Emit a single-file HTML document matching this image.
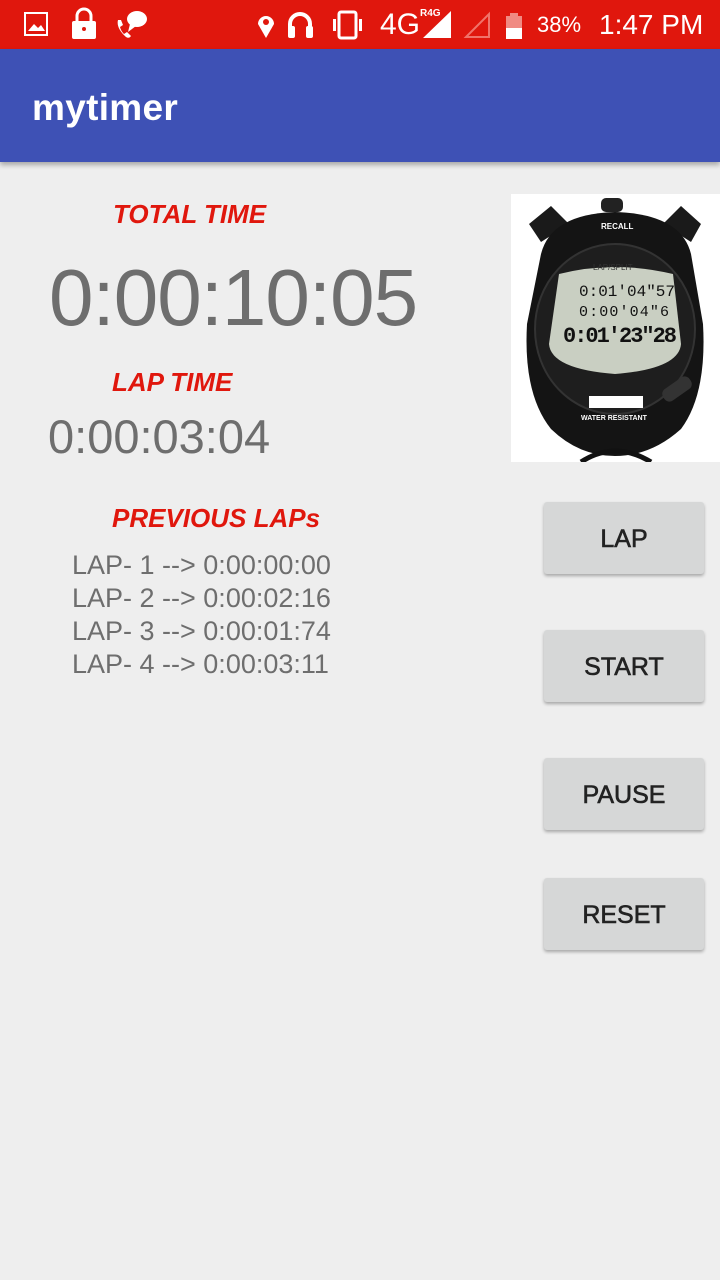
<!DOCTYPE html>
<html><head><meta charset="utf-8"><style>
*{margin:0;padding:0;box-sizing:border-box}
body{width:720px;height:1280px;background:#eeeeee;font-family:"Liberation Sans",Roboto,sans-serif;position:relative;overflow:hidden}
.sb{position:absolute;left:0;top:0;width:720px;height:49px;background:#e0170d;color:#fff}
.ab{position:absolute;left:0;top:49px;width:720px;height:113px;background:#3e51b5;box-shadow:0 3px 5px rgba(0,0,0,.3)}
.ab span{position:absolute;left:32px;top:38px;font-size:37px;color:#fff;font-weight:bold;letter-spacing:0.3px}
.lbl{position:absolute;color:#e0170d;font-weight:bold;font-style:italic;font-size:26px}
.t{position:absolute;color:#6e6e6e}
.lap{position:absolute;left:72px;font-size:27px;color:#6e6e6e}
.btn{position:absolute;left:544px;width:160px;height:72px;background:#d6d7d7;border-radius:3px;box-shadow:0 2px 3px rgba(0,0,0,.3);font-size:25px;color:#222;-webkit-text-stroke:0.6px #222;text-align:center;line-height:74px}
</style></head><body>
<div class="sb">
<svg width="720" height="49" style="position:absolute;left:0;top:0">
<rect x="25" y="13" width="22" height="22" fill="none" stroke="#fff" stroke-width="2"/>
<path d="M28 31 L34 24 L38 28 L41 25 L45 31Z" fill="#fff"/>
<rect x="72" y="21" width="24" height="18" rx="2" fill="#fff"/><path d="M77 21 V16 a7 7 0 0 1 14 0 V21" fill="none" stroke="#fff" stroke-width="3"/><circle cx="84" cy="29" r="2" fill="#e0170d"/>
<path d="M118 20 q-2 8 8 17 q3 2 5-1 l-4-4 -3 2 q-3-3-4-7 l3-2 -2-5z" fill="#fff"/>
<ellipse cx="137" cy="19" rx="10" ry="8" fill="#fff"/><path d="M130 24 L128 32 L136 26Z" fill="#fff"/>
<path d="M266 38 L258 24 a8 8 0 1 1 16 0Z" fill="#fff"/><circle cx="266" cy="22" r="3" fill="#e0170d"/>
<path d="M290 33 V24 a10 10 0 0 1 20 0 V33" fill="none" stroke="#fff" stroke-width="4"/><rect x="288" y="26" width="7" height="12" rx="2" fill="#fff"/><rect x="306" y="26" width="7" height="12" rx="2" fill="#fff"/>
<rect x="339" y="12" width="17" height="26" rx="2" fill="none" stroke="#fff" stroke-width="3"/><rect x="333" y="19" width="3" height="12" fill="#fff"/><rect x="359" y="19" width="3" height="12" fill="#fff"/>
<path d="M423 38 L451 11 V38Z" fill="#fff"/><path d="M466 37 L489 14 V37Z" fill="none" stroke="#f0736a" stroke-width="2"/>
<rect x="510" y="13" width="8" height="3" fill="#f08a82"/><rect x="506" y="16" width="16" height="23" fill="#f08a82"/><rect x="506" y="28" width="16" height="11" fill="#fff"/>
</svg>
<span style="position:absolute;left:380px;top:8px;font-size:30px">4G</span>
<span style="position:absolute;left:420px;top:8px;font-size:10px;font-weight:bold">R4G</span>
<span style="position:absolute;left:537px;top:12px;font-size:22px">38%</span>
<span style="position:absolute;left:599px;top:9px;font-size:28px">1:47 PM</span>
</div>
<div class="ab"><span>mytimer</span></div>

<div class="lbl" style="left:113px;top:199px">TOTAL TIME</div>
<div class="t" style="left:49px;top:252px;font-size:80px;letter-spacing:-1px">0:00:10:05</div>
<div class="lbl" style="left:112px;top:367px">LAP TIME</div>
<div class="t" style="left:48px;top:409px;font-size:47px">0:00:03:04</div>
<div class="lbl" style="left:112px;top:503px">PREVIOUS LAPs</div>
<div class="lap" style="top:550px">LAP- 1 --&gt; 0:00:00:00</div>
<div class="lap" style="top:583px">LAP- 2 --&gt; 0:00:02:16</div>
<div class="lap" style="top:616px">LAP- 3 --&gt; 0:00:01:74</div>
<div class="lap" style="top:649px">LAP- 4 --&gt; 0:00:03:11</div>

<svg style="position:absolute;left:511px;top:194px" width="209" height="268">
<rect width="209" height="268" fill="#fff"/>
<rect x="90" y="4" width="22" height="14" rx="5" fill="#222"/>
<path d="M18 30 L40 12 L58 30 L30 48Z" fill="#1a1a1a"/>
<path d="M190 30 L170 12 L152 30 L180 48Z" fill="#1a1a1a"/>
<path d="M30 60 Q40 20 104 18 Q170 20 180 60 L192 130 Q196 200 170 235 Q140 262 104 262 Q68 262 40 235 Q12 200 16 130Z" fill="#141414"/>
<ellipse cx="104" cy="135" rx="80" ry="85" fill="#1e1e1e" stroke="#333" stroke-width="2"/>
<path d="M48 80 Q104 66 162 80 L170 150 Q168 175 104 180 Q40 175 38 150Z" fill="#c9cfc2"/>
<text x="68" y="102" font-size="16" font-family="Liberation Mono" fill="#111" textLength="96">0:01'04"57</text>
<text x="68" y="122" font-size="15" font-family="Liberation Mono" fill="#111" textLength="90">0:00'04"6</text>
<text x="52" y="148" font-size="22" font-family="Liberation Mono" font-weight="bold" fill="#111" textLength="114">0:01'23"28</text>
<text x="90" y="35" font-size="8" fill="#fff" font-weight="bold">RECALL</text>
<text x="82" y="76" font-size="8" fill="#333">LAP/SPLIT</text>
<rect x="78" y="202" width="54" height="12" fill="#fff"/>
<text x="70" y="226" font-size="7" fill="#fff" font-weight="bold">WATER RESISTANT</text>
<rect x="150" y="188" width="32" height="14" rx="6" fill="#333" transform="rotate(-35 166 195)"/>
<path d="M70 268 Q104 246 140 268" fill="none" stroke="#111" stroke-width="5"/>
</svg>

<div class="btn" style="top:502px">LAP</div>
<div class="btn" style="top:630px">START</div>
<div class="btn" style="top:758px">PAUSE</div>
<div class="btn" style="top:878px">RESET</div>
</body></html>
